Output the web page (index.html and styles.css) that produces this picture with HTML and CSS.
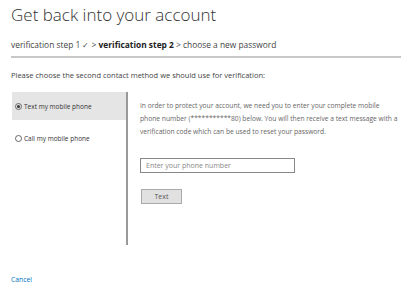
FILE: index.html
```html
<!DOCTYPE html>
<html lang="en">

<head>
    <meta charset="UTF-8" />
    <title>Get back into your account</title>
    <link rel="stylesheet" href="styles.css">
</head>

<body>
    <div class="page">
        <h1>Get back into your account</h1>
        <div class="steps">
            verification step 1 &#10003; &gt; <b>verification step 2</b> &gt; choose a new password
        </div>
        <hr class="rule">

        <p class="intro">Please choose the second contact method we should use for verification:</p>

        <div class="methods">
            <div class="options">
                <label class="option selected"><span class="radio on"></span>Text my mobile phone</label>
                <label class="option"><span class="radio"></span>Call my mobile phone</label>
            </div>
            <div class="detail">
                <p class="info">In order to protect your account, we need you to enter your complete mobile phone number (***********80) below. You will then receive a text message with a verification code which can be used to reset your password.</p>
                <input type="text" class="phone" placeholder="Enter your phone number">
                <button class="send">Text</button>
            </div>
        </div>

        <a class="cancel" href="#">Cancel</a>
    </div>
</body>

</html>
```

FILE: styles.css
```css
:root {
    --text-color: #333;
    --muted-color: #666;
    --panel-color: #e5e5e5;
    --link-color: #0072c6;
}

* {
    box-sizing: border-box;
    margin: 0;
    padding: 0;
}

body {
    font-family: 'Open Sans', sans-serif;
    color: var(--text-color);
    background: #fff;
}

.page {
    padding: 3px 0 0 11px;
}

h1 {
    font-size: 17px;
    font-weight: 300;
    line-height: 24px;
    color: #333;
}

.steps {
    margin-top: 12px;
    font-size: 8.4px;
    line-height: 12px;
    color: #444;
}

.steps b {
    color: #222;
}

.rule {
    border: 0;
    border-top: 2px solid #c8c8c8;
    margin-top: 5px;
}

.intro {
    margin-top: 12px;
    font-size: 7.5px;
    line-height: 10px;
    color: #444;
}

.methods {
    display: flex;
    margin-top: 12px;
    margin-left: 1px;
}

.options {
    width: 116px;
    height: 153px;
    border-right: 2px solid #999;
}

.option {
    display: flex;
    align-items: center;
    height: 28px;
    padding-left: 3px;
    font-size: 6.5px;
    color: #333;
}

.option + .option {
    margin-top: 4px;
}

.option.selected {
    background: var(--panel-color);
}

.radio {
    width: 7px;
    height: 7px;
    border: 1px solid #666;
    border-radius: 50%;
    margin-right: 2px;
    display: flex;
    align-items: center;
    justify-content: center;
}

.radio.on::after {
    content: "";
    width: 3px;
    height: 3px;
    border-radius: 50%;
    background: #333;
}

.detail {
    padding: 7px 0 0 12px;
}

.info {
    width: 258px;
    font-size: 6.7px;
    line-height: 13px;
    color: var(--muted-color);
}

.phone {
    display: block;
    margin-top: 20px;
    width: 155px;
    height: 15px;
    padding: 0 5px;
    border: 1px solid #888;
    font-family: inherit;
    font-size: 7px;
    color: #333;
}

.phone::placeholder {
    color: #888;
}

.send {
    display: block;
    margin: 16px 0 0 1px;
    width: 41px;
    height: 15px;
    border: 1px solid #aaa;
    background: #e1e1e1;
    font-family: inherit;
    font-size: 7px;
    color: #555;
}

.cancel {
    display: inline-block;
    margin-top: 30px;
    font-size: 6.8px;
    line-height: 10px;
    color: var(--link-color);
    text-decoration: none;
}
```
